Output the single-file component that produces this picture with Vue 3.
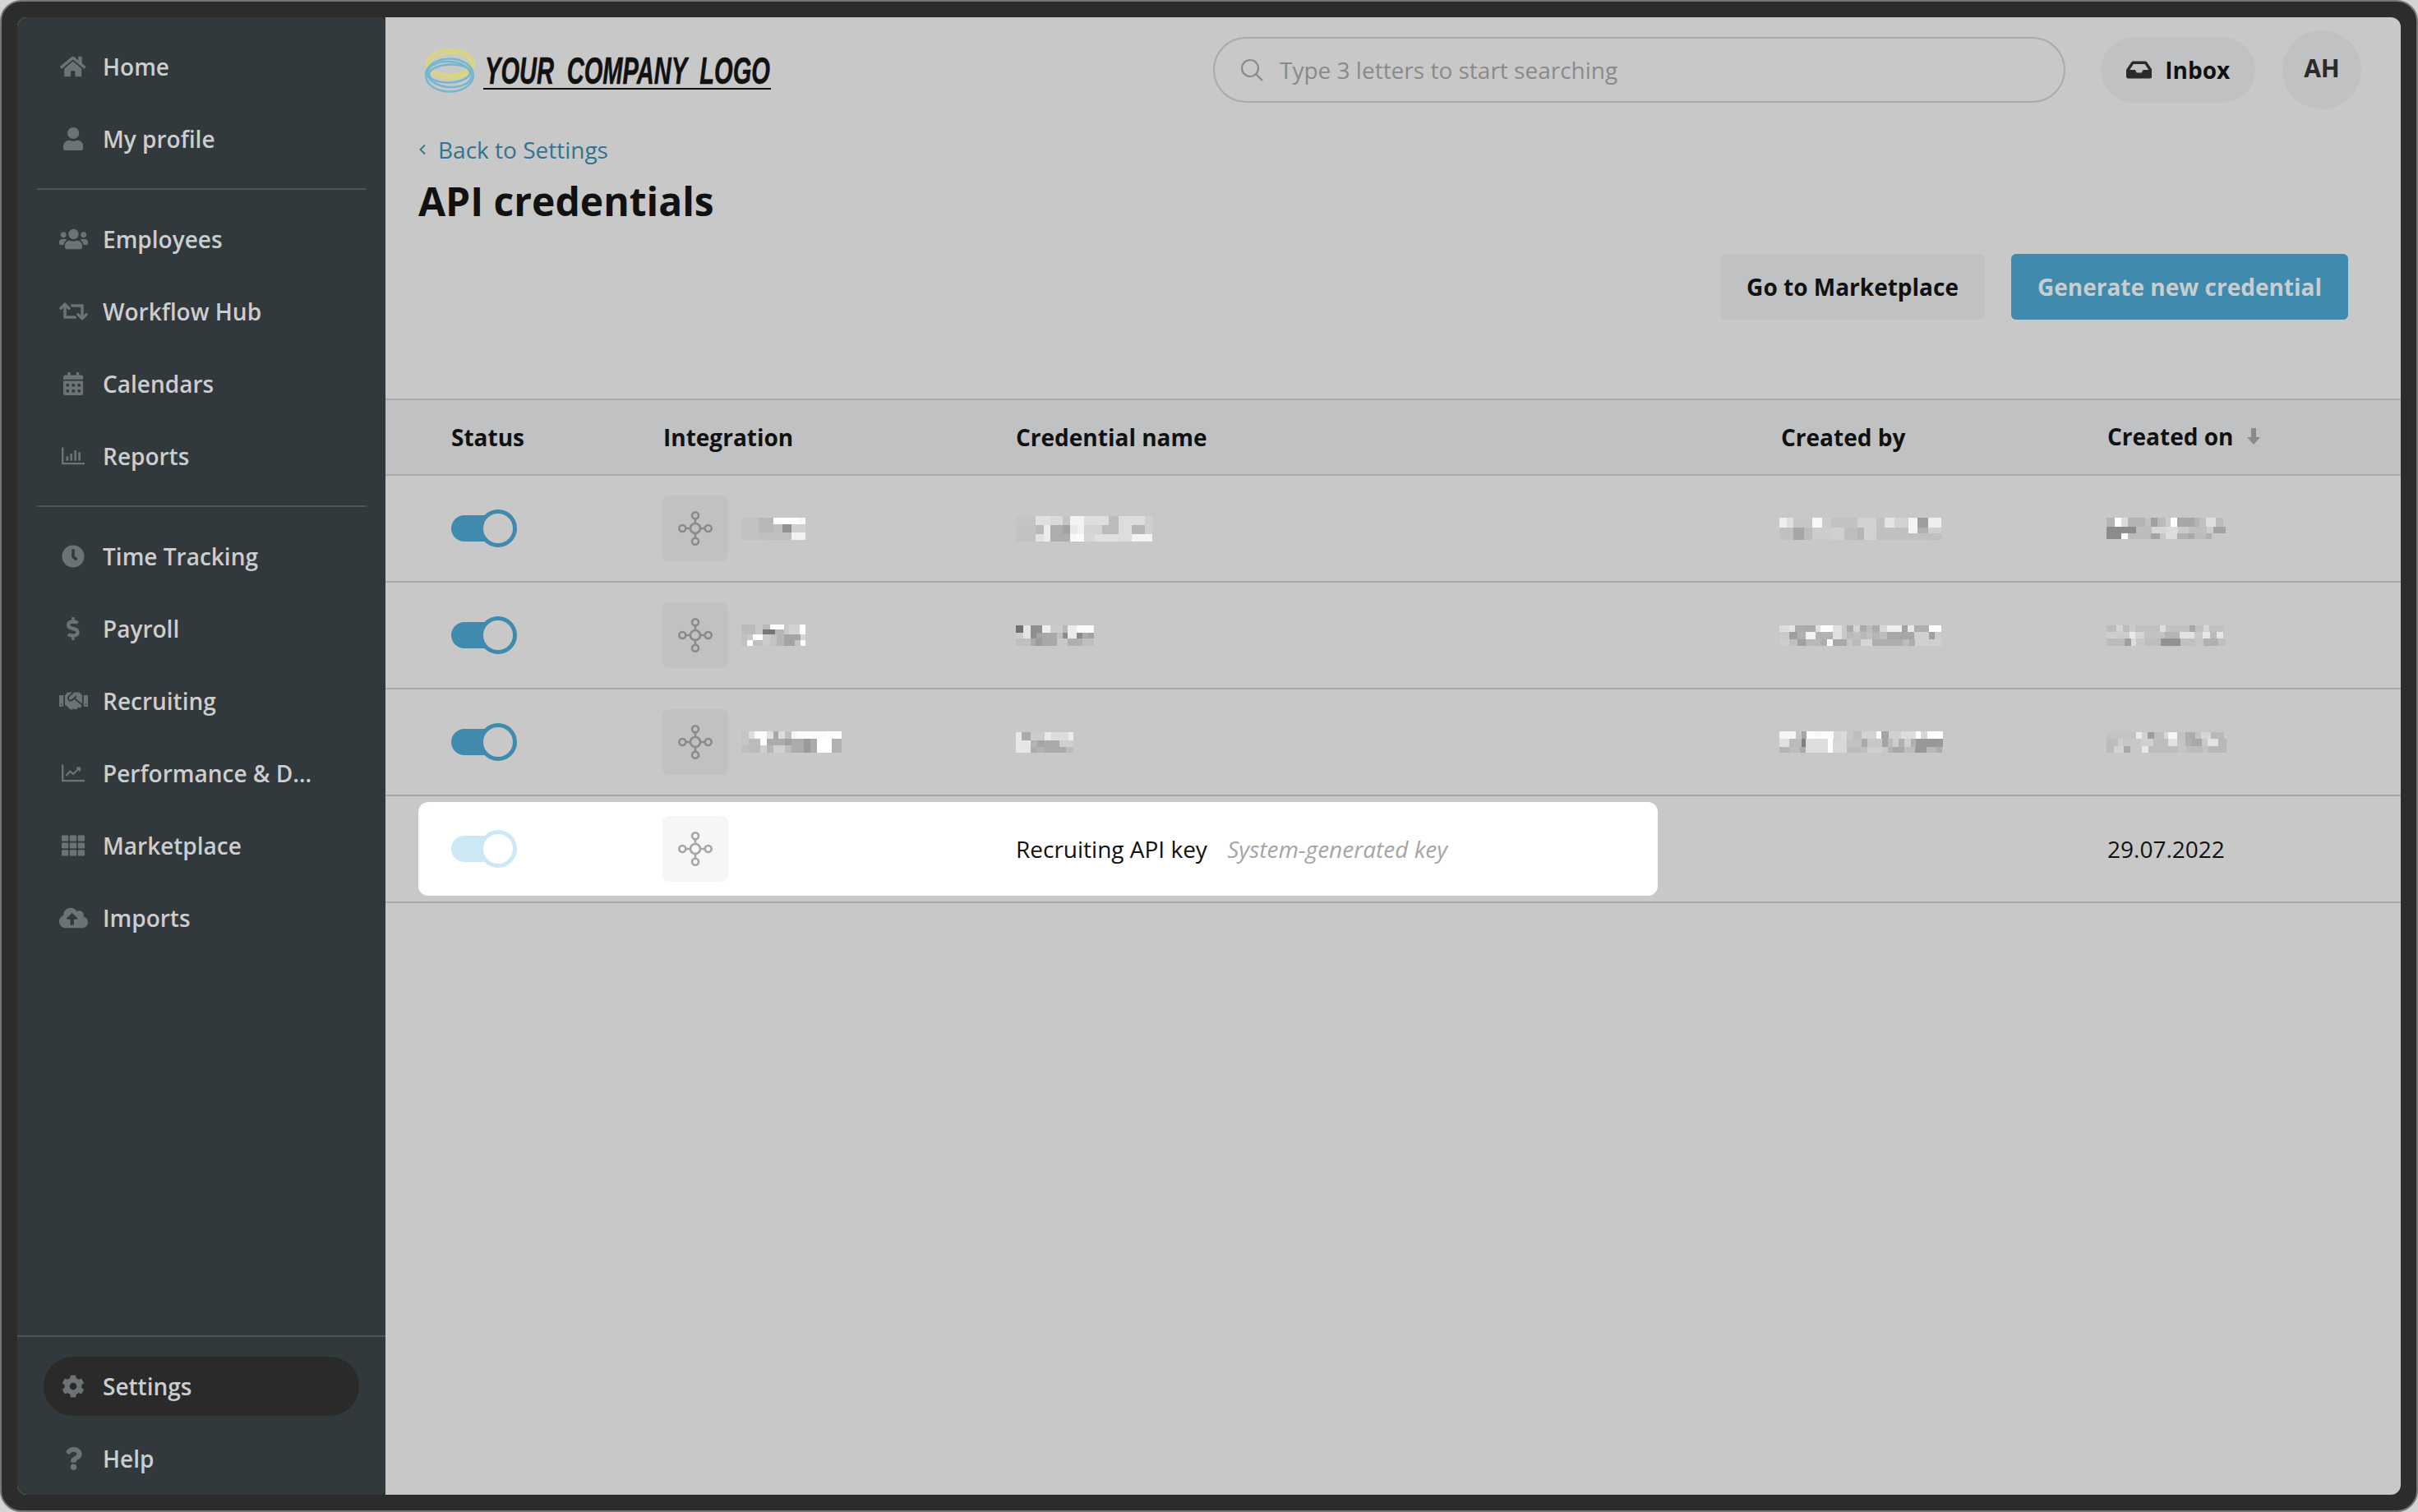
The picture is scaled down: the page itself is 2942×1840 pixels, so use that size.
<template>
  <div class="frame">
    <div class="app">
      <aside class="sidebar">
        <nav class="nav">
          <template v-for="(group, i) in navGroups" :key="i">
            <div v-if="i > 0" class="nav-divider"></div>
            <a v-for="item in group" :key="item.label" class="nav-item">
              <span class="nav-icon">
                <svg :viewBox="item.box" height="28" fill="currentColor">
                  <path :d="item.d" />
                  <path v-if="item.line" :d="item.line" fill="none" stroke="currentColor" stroke-width="40" />
                </svg>
              </span>
              <span class="nav-label">{{ item.label }}</span>
            </a>
          </template>
        </nav>
        <div class="nav-bottom">
          <a v-for="item in bottomItems" :key="item.label" class="nav-item" :class="{ active: item.active }">
            <span class="nav-icon">
              <svg :viewBox="item.box" height="28" fill="currentColor"><path :d="item.d" /></svg>
            </span>
            <span class="nav-label">{{ item.label }}</span>
          </a>
        </div>
      </aside>

      <main class="main">
        <header class="topbar">
          <svg class="logo" viewBox="0 0 425 60" width="425" height="60">
            <g fill="none" stroke="#d9d582" stroke-width="2.4">
              <ellipse cx="33" cy="23" rx="29" ry="18" />
              <ellipse cx="33" cy="22.5" rx="27" ry="15.5" transform="rotate(3 33 23)" />
              <ellipse cx="33" cy="23" rx="25" ry="13" transform="rotate(-4 33 23)" />
            </g>
            <g fill="none" stroke="#74b6cf" stroke-width="2.4">
              <ellipse cx="32" cy="36.5" rx="29" ry="20" />
              <ellipse cx="32" cy="35.5" rx="27" ry="15.5" transform="rotate(4 32 36)" />
              <ellipse cx="32" cy="34.5" rx="25" ry="11" transform="rotate(-3 32 35)" />
            </g>
            <text class="logo-text" x="75" y="47" textLength="347" lengthAdjust="spacingAndGlyphs">YOUR COMPANY LOGO</text>
            <rect x="73" y="52" width="350" height="2" fill="#111" />
          </svg>

          <div class="search">
            <svg class="search-icon" viewBox="0 0 28 28" fill="none" stroke="#8a8a8a" stroke-width="2.2">
              <circle cx="12" cy="12" r="10" />
              <path d="M19 19l8 8" />
            </svg>
            <input class="search-input" type="text" placeholder="Type 3 letters to start searching">
          </div>

          <button class="inbox">
            <svg viewBox="0 0 576 512" height="28" fill="#2a2a2a">
              <path d="M567.938 243.908L462.25 85.374A48.003 48.003 0 0 0 422.311 64H153.689a48 48 0 0 0-39.938 21.374L8.062 243.908A47.994 47.994 0 0 0 0 270.533V400c0 26.51 21.49 48 48 48h480c26.51 0 48-21.49 48-48V270.533a47.994 47.994 0 0 0-8.062-26.625zM162.252 128h251.497l85.333 128H376l-32 64H232l-32-64H76.918l85.334-128z" />
            </svg>
            Inbox
          </button>
          <div class="avatar">AH</div>
        </header>

        <div class="page-head">
          <a class="back">
            <svg viewBox="0 0 10 14" width="10" height="14" fill="none" stroke="#33738f" stroke-width="1.8"><path d="M8 1.5L2.5 7 8 12.5" /></svg>
            Back to Settings
          </a>
          <h1 class="title">API credentials</h1>
        </div>

        <div class="actions">
          <button class="btn">Go to Marketplace</button>
          <button class="btn primary">Generate new credential</button>
        </div>

        <section class="table">
          <div class="row head">
            <div>Status</div>
            <div>Integration</div>
            <div>Credential name</div>
            <div>Created by</div>
            <div class="sorted">
              Created on
              <svg viewBox="0 0 16 20" width="16" height="20" fill="#8a8a8a"><path d="M5 0h6v11h5l-8 9-8-9h5z" /></svg>
            </div>
          </div>

          <div v-for="(row, i) in redactedRows" :key="i" class="row">
            <div class="toggle"><span class="track"></span><span class="knob"></span></div>
            <div class="integration">
              <span class="int-icon">
                <svg viewBox="0 0 42 42" width="42" height="42" fill="none" stroke="#8a8a8a" stroke-width="2.6">
                  <circle cx="21" cy="21" r="6" />
                  <circle cx="21" cy="5.3" r="4" />
                  <circle cx="21" cy="36.7" r="4" />
                  <circle cx="5.3" cy="21" r="4" />
                  <circle cx="36.7" cy="21" r="4" />
                  <path d="M21 9v6M21 27v6M9 21h6M27 21h6" />
                </svg>
              </span>
              <div class="mosaic">
                <div v-for="(r, j) in parse(row.integration)" :key="j" class="mosaic-row" :style="{ height: r.h + 'px' }">
                  <span v-for="(c, k) in r.cells" :key="k" :style="{ width: c.w + 'px', background: c.color }"></span>
                </div>
              </div>
            </div>
            <div class="mosaic">
              <div v-for="(r, j) in parse(row.name)" :key="j" class="mosaic-row" :style="{ height: r.h + 'px' }">
                <span v-for="(c, k) in r.cells" :key="k" :style="{ width: c.w + 'px', background: c.color }"></span>
              </div>
            </div>
            <div class="mosaic by">
              <div v-for="(r, j) in parse(row.by, wideCell)" :key="j" class="mosaic-row" :style="{ height: r.h + 'px' }">
                <span v-for="(c, k) in r.cells" :key="k" :style="{ width: c.w + 'px', background: c.color }"></span>
              </div>
            </div>
            <div class="mosaic on">
              <div v-for="(r, j) in parse(row.on, wideCell)" :key="j" class="mosaic-row" :style="{ height: r.h + 'px' }">
                <span v-for="(c, k) in r.cells" :key="k" :style="{ width: c.w + 'px', background: c.color }"></span>
              </div>
            </div>
          </div>

          <div class="row spotlight">
            <div class="toggle"><span class="track"></span><span class="knob"></span></div>
            <div class="integration">
              <span class="int-icon">
                <svg viewBox="0 0 42 42" width="42" height="42" fill="none" stroke="#a6a6a6" stroke-width="2.6">
                  <circle cx="21" cy="21" r="6" />
                  <circle cx="21" cy="5.3" r="4" />
                  <circle cx="21" cy="36.7" r="4" />
                  <circle cx="5.3" cy="21" r="4" />
                  <circle cx="36.7" cy="21" r="4" />
                  <path d="M21 9v6M21 27v6M9 21h6M27 21h6" />
                </svg>
              </span>
            </div>
            <div class="cred">Recruiting API key <em>System-generated key</em></div>
            <div></div>
            <div class="date">29.07.2022</div>
          </div>
        </section>
      </main>
    </div>
  </div>
</template>

<script setup>
const navGroups = [
  [
    { label: 'Home', box: '0 0 576 512', d: 'M280.37 148.26L96 300.11V464a16 16 0 0 0 16 16l112.06-.29a16 16 0 0 0 15.92-16V368a16 16 0 0 1 16-16h64a16 16 0 0 1 16 16v95.64a16 16 0 0 0 16 16.05L464 480a16 16 0 0 0 16-16V300L295.67 148.26a12.19 12.19 0 0 0-15.3 0zM571.6 251.47L488 182.56V44.05a12 12 0 0 0-12-12h-56a12 12 0 0 0-12 12v72.61L318.47 43a48 48 0 0 0-61 0L4.34 251.47a12 12 0 0 0-1.6 16.9l25.5 31A12 12 0 0 0 45.15 301l235.22-193.74a12.19 12.19 0 0 1 15.3 0L530.9 301a12 12 0 0 0 16.9-1.6l25.5-31a12 12 0 0 0-1.7-16.93z' },
    { label: 'My profile', box: '0 0 448 512', d: 'M224 256c70.7 0 128-57.3 128-128S294.7 0 224 0 96 57.3 96 128s57.3 128 128 128zm89.6 32h-16.7c-22.2 10.2-46.9 16-72.9 16s-50.6-5.8-72.9-16h-16.7C60.2 288 0 348.2 0 422.4V464c0 26.5 21.5 48 48 48h352c26.5 0 48-21.5 48-48v-41.6c0-74.2-60.2-134.4-134.4-134.4z' },
  ],
  [
    { label: 'Employees', box: '0 0 640 512', d: 'M96 224c35.3 0 64-28.7 64-64s-28.7-64-64-64-64 28.7-64 64 28.7 64 64 64zm448 0c35.3 0 64-28.7 64-64s-28.7-64-64-64-64 28.7-64 64 28.7 64 64 64zm32 32h-64c-17.6 0-33.5 7.1-45.1 18.6 40.3 22.1 68.9 62 75.1 109.4h66c17.7 0 32-14.3 32-32v-32c0-35.3-28.7-64-64-64zm-256 0c61.9 0 112-50.1 112-112S381.9 32 320 32 208 82.1 208 144s50.1 112 112 112zm76.8 32h-8.3c-20.8 10-43.9 16-68.5 16s-47.6-6-68.5-16h-8.3C179.6 288 128 339.6 128 403.2V432c0 26.5 21.5 48 48 48h288c26.5 0 48-21.5 48-48v-28.8c0-63.6-51.6-115.2-115.2-115.2zm-223.7-13.4C161.5 263.1 145.6 256 128 256H64c-35.3 0-64 28.7-64 64v32c0 17.7 14.3 32 32 32h65.9c6.3-47.4 34.9-87.3 75.2-109.4z' },
    { label: 'Workflow Hub', box: '0 0 640 512', d: 'M629.657 343.598L528.971 444.284c-9.373 9.372-24.568 9.372-33.941 0L394.343 343.598c-9.373-9.373-9.373-24.569 0-33.941l10.823-10.823c9.562-9.562 25.133-9.34 34.419.492L480 342.118V160H292.451a24.005 24.005 0 0 1-16.971-7.029l-16-16C244.361 121.851 255.069 96 276.451 96H520c13.255 0 24 10.745 24 24v222.118l40.416-42.792c9.285-9.831 24.856-10.054 34.419-.492l10.823 10.823c9.372 9.372 9.372 24.569-.001 33.941zm-265.138 15.431A23.999 23.999 0 0 0 347.548 352H160V169.881l40.416 42.792c9.286 9.831 24.856 10.054 34.419.491l10.822-10.822c9.373-9.373 9.373-24.569 0-33.941L144.971 67.716c-9.373-9.373-24.569-9.373-33.941 0L10.343 168.402c-9.373 9.373-9.373 24.569 0 33.941l10.822 10.822c9.562 9.562 25.133 9.34 34.419-.491L96 169.881V392c0 13.255 10.745 24 24 24h243.549c21.382 0 32.09-25.851 16.971-40.971l-16.001-16z' },
    { label: 'Calendars', box: '0 0 448 512', d: 'M0 464c0 26.5 21.5 48 48 48h352c26.5 0 48-21.5 48-48V192H0v272zm320-196c0-6.6 5.4-12 12-12h40c6.6 0 12 5.4 12 12v40c0 6.6-5.4 12-12 12h-40c-6.6 0-12-5.4-12-12v-40zm0 128c0-6.6 5.4-12 12-12h40c6.6 0 12 5.4 12 12v40c0 6.6-5.4 12-12 12h-40c-6.6 0-12-5.4-12-12v-40zM192 268c0-6.6 5.4-12 12-12h40c6.6 0 12 5.4 12 12v40c0 6.6-5.4 12-12 12h-40c-6.6 0-12-5.4-12-12v-40zm0 128c0-6.6 5.4-12 12-12h40c6.6 0 12 5.4 12 12v40c0 6.6-5.4 12-12 12h-40c-6.6 0-12-5.4-12-12v-40zM64 268c0-6.6 5.4-12 12-12h40c6.6 0 12 5.4 12 12v40c0 6.6-5.4 12-12 12H76c-6.6 0-12-5.4-12-12v-40zm0 128c0-6.6 5.4-12 12-12h40c6.6 0 12 5.4 12 12v40c0 6.6-5.4 12-12 12H76c-6.6 0-12-5.4-12-12v-40zM400 64h-48V16c0-8.8-7.2-16-16-16h-32c-8.8 0-16 7.2-16 16v48H160V16c0-8.8-7.2-16-16-16h-32c-8.8 0-16 7.2-16 16v48H48C21.5 64 0 85.5 0 112v48h448v-48c0-26.5-21.5-48-48-48z' },
    { label: 'Reports', box: '0 0 512 512', d: 'M0 64h44v336h468v44H0zM100 260h50v100h-50zM190 200h50v160h-50zM280 130h50v230h-50zM370 170h50v190h-50z' },
  ],
  [
    { label: 'Time Tracking', box: '0 0 512 512', d: 'M256,8C119,8,8,119,8,256S119,504,256,504,504,393,504,256,393,8,256,8Zm92.49,313h0l-20,25a16,16,0,0,1-22.49,2.5h0l-67-49.72a40,40,0,0,1-15-31.23V112a16,16,0,0,1,16-16h32a16,16,0,0,1,16,16V256l58,42.5A16,16,0,0,1,348.49,321Z' },
    { label: 'Payroll', box: '0 0 288 512', d: 'M209.2 233.4l-108-31.6C88.7 198.2 80 186.5 80 173.5c0-16.3 13.2-29.5 29.5-29.5h66.3c12.2 0 24.2 3.7 34.2 10.5 6.1 4.1 14.3 3.1 19.5-2l34.8-34c7.1-6.9 6.1-18.4-1.8-24.5C238 74.8 207.4 64.1 176 64V16c0-8.8-7.2-16-16-16h-32c-8.8 0-16 7.2-16 16v48h-2.5C45.8 64-5.4 118.7.5 183.6c4.2 46.1 39.4 83.6 83.8 96.6l102.5 30c12.5 3.7 21.2 15.3 21.2 28.3 0 16.3-13.2 29.5-29.5 29.5h-66.3C100 368 88 364.3 78 357.5c-6.1-4.1-14.3-3.1-19.5 2l-34.8 34c-7.1 6.9-6.1 18.4 1.8 24.5 24.5 19.2 55.1 29.9 86.5 30v48c0 8.8 7.2 16 16 16h32c8.8 0 16-7.2 16-16v-48.2c46.6-.9 90.3-28.6 105.7-72.7 21.5-61.6-14.6-124.8-72.5-141.7z' },
    { label: 'Recruiting', box: '0 0 640 512', d: 'M434.7 64h-85.9c-8 0-15.7 3-21.6 8.4l-98.3 90c-.1.1-.2.3-.3.4-16.6 15.6-16.3 40.5-2.1 56 12.7 13.9 39.4 17.6 56.1 2.7.1-.1.3-.1.4-.2l79.9-73.2c6.5-5.9 16.7-5.5 22.6 1 6 6.5 5.5 16.6-1 22.6l-26.1 23.9L504 313.8c2.9 2.4 5.5 5 7.9 7.7V128l-54.6-54.6c-5.9-6-14.1-9.4-22.6-9.4zM544 128.2v223.9c0 17.7 14.3 32 32 32h64V128.2h-96zm48 223.9c-8.8 0-16-7.2-16-16s7.2-16 16-16 16 7.2 16 16-7.2 16-16 16zM0 384h64c17.7 0 32-14.3 32-32V128.2H0V384zm48-63.9c8.8 0 16 7.2 16 16s-7.2 16-16 16-16-7.2-16-16c0-8.9 7.2-16 16-16zm435.9 18.6L334.6 217.5l-30 27.5c-29.7 27.1-75.2 24.5-101.7-4.4-26.9-29.4-24.8-74.9 4.4-101.7L289.1 64h-83.8c-8.5 0-16.6 3.4-22.6 9.4L128 128v223.9h18.3l90.5 81.9c27.4 22.3 67.7 18.1 90-9.3l.2-.2 17.9 15.5c15.9 13 39.4 10.5 52.3-5.4l31.4-38.6 5.4 4.4c13.7 11.1 33.9 9.1 45-4.7l9.5-11.7c11.2-13.8 9.1-33.9-4.6-45.1z' },
    { label: 'Performance & Development', box: '0 0 512 512', d: 'M0 64h44v336h468v44H0z', line: 'M95 310l95-95 70 55 130-125M330 140h70v70' },
    { label: 'Marketplace', box: '0 0 512 512', d: 'M0 48a20 20 0 0 1 20-20h112a20 20 0 0 1 20 20v92a20 20 0 0 1-20 20H20a20 20 0 0 1-20-20zM180 48a20 20 0 0 1 20-20h112a20 20 0 0 1 20 20v92a20 20 0 0 1-20 20H200a20 20 0 0 1-20-20zM360 48a20 20 0 0 1 20-20h112a20 20 0 0 1 20 20v92a20 20 0 0 1-20 20H380a20 20 0 0 1-20-20zM0 210a20 20 0 0 1 20-20h112a20 20 0 0 1 20 20v92a20 20 0 0 1-20 20H20a20 20 0 0 1-20-20zM180 210a20 20 0 0 1 20-20h112a20 20 0 0 1 20 20v92a20 20 0 0 1-20 20H200a20 20 0 0 1-20-20zM360 210a20 20 0 0 1 20-20h112a20 20 0 0 1 20 20v92a20 20 0 0 1-20 20H380a20 20 0 0 1-20-20zM0 372a20 20 0 0 1 20-20h112a20 20 0 0 1 20 20v92a20 20 0 0 1-20 20H20a20 20 0 0 1-20-20zM180 372a20 20 0 0 1 20-20h112a20 20 0 0 1 20 20v92a20 20 0 0 1-20 20H200a20 20 0 0 1-20-20zM360 372a20 20 0 0 1 20-20h112a20 20 0 0 1 20 20v92a20 20 0 0 1-20 20H380a20 20 0 0 1-20-20z' },
    { label: 'Imports', box: '0 0 640 512', d: 'M537.6 226.6c4.1-10.7 6.4-22.4 6.4-34.6 0-53-43-96-96-96-19.7 0-38.1 6-53.3 16.2C367 64.2 315.3 32 256 32c-88.4 0-160 71.6-160 160 0 2.7.1 5.4.2 8.1C40.2 219.8 0 273.2 0 336c0 79.5 64.5 144 144 144h368c70.7 0 128-57.3 128-128 0-61.9-44-113.6-102.4-125.4zM393.4 288H328v112c0 8.8-7.2 16-16 16h-48c-8.8 0-16-7.2-16-16V288h-65.4c-14.3 0-21.4-17.2-11.3-27.3l105.4-105.4c6.2-6.2 16.4-6.2 22.6 0l105.4 105.4c10.1 10.1 2.9 27.3-11.3 27.3z' },
  ],
]

const bottomItems = [
  { label: 'Settings', active: true, box: '0 0 512 512', d: 'M487.4 315.7l-42.6-24.6c4.3-23.2 4.3-47 0-70.2l42.6-24.6c4.9-2.8 7.1-8.6 5.5-14-11.1-35.6-30-67.8-54.7-94.6-3.8-4.1-10-5.1-14.8-2.3L380.8 110c-17.9-15.4-38.5-27.3-60.8-35.1V25.8c0-5.6-3.9-10.5-9.4-11.7-36.7-8.2-74.3-7.8-109.2 0-5.5 1.2-9.4 6.1-9.4 11.7V75c-22.2 7.9-42.8 19.8-60.8 35.1L88.7 85.5c-4.9-2.8-11-1.9-14.8 2.3-24.7 26.7-43.6 58.9-54.7 94.6-1.7 5.4.6 11.2 5.5 14L67.3 221c-4.3 23.2-4.3 47 0 70.2l-42.6 24.6c-4.9 2.8-7.1 8.6-5.5 14 11.1 35.6 30 67.8 54.7 94.6 3.8 4.1 10 5.1 14.8 2.3l42.6-24.6c17.9 15.4 38.5 27.3 60.8 35.1v49.2c0 5.6 3.9 10.5 9.4 11.7 36.7 8.2 74.3 7.8 109.2 0 5.5-1.2 9.4-6.1 9.4-11.7v-49.2c22.2-7.9 42.8-19.8 60.8-35.1l42.6 24.6c4.9 2.8 11 1.9 14.8-2.3 24.7-26.7 43.6-58.9 54.7-94.6 1.5-5.5-.7-11.3-5.6-14.1zM256 336c-44.1 0-80-35.9-80-80s35.9-80 80-80 80 35.9 80 80-35.9 80-80 80z' },
  { label: 'Help', box: '0 0 384 512', d: 'M202.021 0C122.202 0 70.503 32.703 29.914 91.026c-7.363 10.58-5.093 25.086 5.178 32.874l43.138 32.709c10.373 7.865 25.132 6.026 33.253-4.148 25.049-31.381 43.63-49.449 82.757-49.449 30.764 0 68.816 19.799 68.816 49.631 0 22.552-18.617 34.134-48.993 51.164-35.423 19.86-82.299 44.576-82.299 106.405V320c0 13.255 10.745 24 24 24h72.471c13.255 0 24-10.745 24-24v-5.773c0-42.86 125.268-44.645 125.268-160.627C377.504 66.256 286.902 0 202.021 0zM192 373.459c-38.196 0-69.271 31.075-69.271 69.271 0 38.195 31.075 69.27 69.271 69.27s69.271-31.075 69.271-69.271-31.075-69.27-69.271-69.27z' },
]

// redacted cells: "rowHeight|width:gray width:gray ..."
const redactedRows = [
  {
    integration: ['8|21:c2 18:b8 31:ff 8:f8', '10|21:c2 18:b8 11:bd 11:92 17:d0', '9|21:c2 10:c0 30:bf 17:f2'],
    name: [
      '11|24:c4 18:e0 15:da 9:c4 17:f3 30:de 12:bb 32:dd 9:cf',
      '11|24:c2 10:b9 8:ec 15:ad 9:a3 9:ea 8:f1 22:d4 20:bb 16:dd 16:b6 9:d0',
      '9|24:c2 10:e0 8:ec 24:ad 8:f8 9:fc 13:d6 29:e0 16:dd 25:f3',
    ],
    by: [
      '12|8:ee 8:df 21:c6 12:f8 10:cb 30:c2 21:d2 10:c2 11:e4 16:d2 10:f3 12:9e 15:ee',
      '7|16:c0 12:a6 9:bd 22:cc 15:cf 15:bd 7:b5 14:d2 37:c0 10:f3 12:b0 15:cf',
      '8|16:c0 12:a6 9:bd 22:cc 15:cf 15:bd 7:b5 14:d2 60:c0 15:bf',
    ],
    on: [
      '11|9:b5 8:ff 7:dc 20:b3 6:c0 8:a0 9:ba 6:cc 7:ff 20:a6 6:b3 7:c0 11:de 9:bc',
      '8|34:8c 17:bd 17:d6 13:dc 12:ca 21:be 7:ce 14:a3',
      '7|17:8c 7:ff 26:bb 11:a5 6:c8 13:dc 12:b0 8:a8 13:bc 7:b0 14:c8',
    ],
  },
  {
    integration: [
      '6|17:b9 9:c8 9:b9 17:ff 6:c9 13:d2 7:ff',
      '6|17:bb 9:c8 15:77 11:b5 6:c9 13:d2 7:ff',
      '7|7:c0 7:c8 12:ff 9:cb 8:c2 9:b5 20:a4 6:d5',
      '7|7:c0 7:ff 12:bf 9:cb 8:c2 9:b5 13:a4 7:c4 6:ff',
    ],
    name: [
      '9|9:70 9:e4 14:8f 10:ee 15:cb 6:b8 11:ec 21:fa',
      '7|9:cc 9:e4 7:8f 7:a3 18:a8 7:bf 6:8c 11:ec 7:8a 7:ac 7:a3',
      '9|18:c0 6:ab 8:9b 18:a8 13:c8 18:b0 14:bf',
    ],
    by: [
      '8|11:dc 7:e4 12:ac 11:aa 6:e0 14:ff 10:e0 6:c8 7:ab 8:d4 7:ab 7:bb 8:ab 8:d8 17:ee 7:a2 7:e8 17:ae 14:ff',
      '9|11:ca 10:9e 9:b0 11:f2 20:b2 10:e0 6:c8 7:bc 8:c0 7:b8 7:bf 8:b5 8:bd 31:a6 17:d0 7:a0 7:cc',
      '8|11:cd 10:c0 9:a0 17:b8 7:ae 7:ff 16:a8 6:c6 9:ba 14:d6 34:ae 8:bc 6:ac 31:d0',
    ],
    on: [
      '8|11:bc 8:d4 7:bc 7:cb 28:c0 6:de 27:c2 7:a8 9:c0 7:d6 17:c2',
      '8|11:cf 15:cc 7:ea 10:d4 23:c2 17:b5 17:e2 9:c8 9:e6 7:ba 8:e4',
      '9|21:bb 7:a0 6:dc 10:c6 18:bd 22:92 17:c0 9:c6 17:b0 8:c0',
    ],
  },
  {
    integration: [
      '9|9:c4 7:dd 15:fc 8:e0 6:a8 8:dc 8:bf 6:f5 37:fb 18:ff',
      '8|9:c6 14:bb 8:fc 22:ab 8:a0 15:ab 8:9a 8:ab 18:ff 12:b2',
      '9|9:bf 14:bb 8:cf 8:b5 14:d0 8:bb 15:ab 8:9a 8:ab 18:ff 12:b2',
    ],
    name: [
      '10|7:e8 11:aa 17:cc 8:ea 21:dc 6:ec',
      '8|18:e6 8:b4 9:a5 18:aa 17:d0',
      '7|18:e6 8:ac 9:b2 26:aa 9:bc',
    ],
    by: [
      '9|19:f5 6:c6 6:a6 9:ff 8:f8 14:fd 8:d4 7:da 7:c8 9:bd 17:d2 6:ff 8:a4 14:d0 17:dd 6:ff 7:d6 18:ff',
      '10|11:e0 14:bc 5:80 25:dd 6:ff 16:d8 16:c2 7:aa 17:c8 6:a4 6:bb 6:cd 7:b0 7:cf 6:b0 31:98',
      '7|11:b5 12:bd 7:ab 25:dd 6:ff 16:d8 16:bc 7:c0 17:cf 6:c8 6:b4 13:a8 12:bd 13:98 11:b8 7:ac',
    ],
    on: [
      '8|34:c3 6:ea 7:d2 7:9c 11:bf 5:d8 10:f6 10:c2 11:ad 6:c4 12:d6 15:b8',
      '9|13:bd 6:cf 7:c6 13:c8 14:d0 17:bd 10:e2 10:c4 7:b0 11:a8 7:c8 12:e2 9:b8',
      '8|8:bc 12:d2 7:a8 13:c8 8:e8 23:bd 10:bd 10:c4 18:bc 7:c4 20:b8',
    ],
  },
]

// the two right-hand columns have slightly wider cells
const wideCell = 1.0714

const parse = (rows, scale = 1) => rows.map((line) => {
  const [h, cells] = line.split('|')
  return {
    h: Number(h),
    cells: cells.split(' ').map((c) => {
      const [w, g] = c.split(':')
      return { w: Number(w) * scale, color: `#${g}${g}${g}` }
    }),
  }
})
</script>

<style scoped>
.frame {
  width: 2942px;
  height: 1840px;
  box-sizing: border-box;
  padding: 19px;
  background: #2c2c2c;
  border: 2px solid #777;
  border-radius: 26px;
  overflow: hidden;
  font-family: "Open Sans", "Noto Sans", sans-serif;
  font-size: 28px;
  color: #111;
}

.app {
  display: flex;
  height: 100%;
  border-radius: 12px;
  overflow: hidden;
  background: #c8c8c8;
}

.sidebar {
  width: 448px;
  flex-shrink: 0;
  display: flex;
  flex-direction: column;
  justify-content: space-between;
  background: #32393c;
  color: #cbcdce;
}

.nav {
  display: flex;
  flex-direction: column;
  padding-top: 16px;
}

.nav-divider {
  height: 2px;
  margin: 16px 24px;
  background: #4f5659;
}

.nav-item {
  display: flex;
  align-items: center;
  height: 72px;
  margin: 8px 32px;
  padding-left: 18px;
  border-radius: 36px;
  font-weight: 600;
}

.nav-item.active {
  background: #2a2a2a;
}

.nav-icon {
  width: 36px;
  display: flex;
  justify-content: center;
  margin-right: 18px;
  color: #6c7376;
}

.nav-label {
  max-width: 256px;
  white-space: nowrap;
  overflow: hidden;
  text-overflow: ellipsis;
}

.nav-bottom {
  display: flex;
  flex-direction: column;
  border-top: 2px solid #4f5659;
  padding-top: 16px;
}

.main {
  flex: 1;
  min-width: 0;
}

.topbar {
  display: flex;
  align-items: center;
  height: 96px;
  margin-top: 16px;
  padding: 0 48px 0 46px;
}

.logo {
  flex-shrink: 0;
}

.logo-text {
  font-family: "Liberation Sans", sans-serif;
  font-size: 46px;
  font-weight: 700;
  font-style: italic;
  word-spacing: 12px;
  fill: #111;
  stroke: #111;
  stroke-width: 0.6;
}

.search {
  display: flex;
  align-items: center;
  width: 1037px;
  height: 80px;
  box-sizing: border-box;
  margin-left: auto;
  padding: 0 31px;
  border: 2px solid #aaa;
  border-radius: 40px;
}

.search-icon {
  width: 28px;
  height: 28px;
  margin-right: 20px;
  flex-shrink: 0;
}

.search-input {
  flex: 1;
  border: none;
  outline: none;
  background: none;
  font: inherit;
  color: #111;
  padding: 0;
}

.search-input::placeholder {
  color: #8a8a8a;
  opacity: 1;
}

.inbox {
  display: flex;
  align-items: center;
  justify-content: center;
  gap: 16px;
  width: 188px;
  height: 80px;
  margin-left: 43px;
  border: none;
  border-radius: 40px;
  background: #bfc1c3;
  font: inherit;
  font-weight: 700;
  color: #111;
}

.avatar {
  width: 96px;
  height: 96px;
  margin-left: 33px;
  border-radius: 50%;
  background: #bfc1c3;
  display: flex;
  align-items: center;
  justify-content: center;
  font-size: 30px;
  font-weight: 700;
  color: #2a2a2a;
  padding-bottom: 6px;
  box-sizing: border-box;
}

.page-head {
  padding: 29px 0 0 40px;
}

.back {
  display: flex;
  align-items: center;
  gap: 14px;
  height: 40px;
  color: #33738f;
}

.title {
  margin: 11px 0 0;
  font-size: 48px;
  line-height: 64px;
  font-weight: 700;
  color: #111;
}

.actions {
  display: flex;
  justify-content: flex-end;
  gap: 32px;
  margin-top: 32px;
  padding-right: 64px;
}

.btn {
  height: 80px;
  padding: 0 32px;
  border: none;
  border-radius: 6px;
  background: #bfc1c3;
  font: inherit;
  font-weight: 700;
  color: #111;
}

.btn.primary {
  background: #408bad;
  color: #c8cdd0;
}

.table {
  margin-top: 96px;
  border-top: 2px solid #a8a8a8;
}

.row {
  position: relative;
  display: grid;
  grid-template-columns: 258px 429px 931px 397px 1fr;
  align-items: center;
  height: 130px;
  box-sizing: border-box;
  padding-left: 80px;
  border-bottom: 2px solid #a8a8a8;
}

.row.head {
  height: 92px;
  background: #bfc1c3;
  font-weight: 700;
}

.sorted {
  display: flex;
  align-items: center;
  gap: 17px;
  margin-top: -3px;
}

.toggle {
  display: flex;
  align-items: center;
  width: 80px;
}

.track {
  width: 44px;
  height: 32px;
  border-radius: 16px 0 0 16px;
  background: #408bad;
}

.knob {
  width: 46px;
  height: 46px;
  box-sizing: border-box;
  margin-left: -10px;
  border: 5px solid #408bad;
  border-radius: 50%;
  background: #c8c8c8;
}

.integration {
  display: flex;
  align-items: center;
  gap: 16px;
  margin-left: -1px;
}

.int-icon {
  width: 80px;
  height: 80px;
  border-radius: 8px;
  background: #bfc1c3;
  display: flex;
  align-items: center;
  justify-content: center;
}

.mosaic-row {
  display: flex;
}

.mosaic-row span {
  display: block;
  height: 100%;
}

.by {
  margin-left: -2px;
}

.on {
  margin-left: -1px;
}

/* the one row left lit by the walkthrough */
.spotlight::before {
  content: "";
  position: absolute;
  left: 40px;
  top: 7px;
  width: 1508px;
  height: 114px;
  border-radius: 12px;
  background: #fff;
}

.spotlight > * {
  position: relative;
}

.spotlight .track {
  background: #cce8f5;
}

.spotlight .knob {
  border-color: #cce8f5;
  background: #fff;
}

.spotlight .int-icon {
  background: #f5f6f7;
}

.cred {
  white-space: nowrap;
}

.cred em {
  margin-left: 17px;
  color: #a5a5a5;
}
</style>

<style>
html, body {
  background: #d4d4d4;
}
</style>
